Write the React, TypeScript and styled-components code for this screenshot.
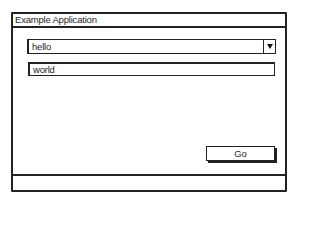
import React from "react";
import styled, { createGlobalStyle } from "styled-components";

const Global = createGlobalStyle`
  html, body { margin: 0; padding: 0; background: #ffffff; }
  body { font-family: "Liberation Sans", Arial, sans-serif; color: #1f1f1f; }
`;

const Page = styled.div`
  width: 300px;
  height: 205px;
  padding: 12px 0 0 11px;
  box-sizing: border-box;
`;

const Window = styled.div`
  width: 276px;
  height: 180px;
  box-sizing: border-box;
  border: 2px solid #222;
  border-radius: 1px;
  display: flex;
  flex-direction: column;
  background: #fff;
`;

const TitleBar = styled.div`
  height: 14px;
  box-sizing: border-box;
  border-bottom: 2px solid #222;
  display: flex;
  align-items: center;
  padding-left: 2px;
  font-size: 9.5px;
  letter-spacing: -0.2px;
  line-height: 1;
`;

const Body = styled.div`
  flex: 1;
  display: flex;
  flex-direction: column;
  padding: 11px 9px 13px 14px;
  gap: 8px;
`;

const Combo = styled.div`
  height: 15px;
  box-sizing: border-box;
  border: 1.5px solid #222;
  border-left-width: 2px;
  display: flex;
  align-items: stretch;
`;

const FieldText = styled.div`
  flex: 1;
  display: flex;
  align-items: center;
  padding-left: 3px;
  font-size: 9.5px;
  letter-spacing: -0.2px;
  line-height: 1;
`;

const DropButton = styled.div`
  width: 11px;
  border-left: 1.5px solid #222;
  display: flex;
  align-items: center;
  justify-content: center;
`;

const Arrow = styled.div`
  width: 0;
  height: 0;
  border-left: 3px solid transparent;
  border-right: 3px solid transparent;
  border-top: 5px solid #111;
`;

const TextField = styled.div`
  height: 14px;
  box-sizing: border-box;
  margin: 0 1px;
  border: 1.5px solid #222;
  border-left-width: 2px;
  border-top-width: 2px;
  display: flex;
`;

const Spacer = styled.div`
  flex: 1;
`;

const ButtonRow = styled.div`
  display: flex;
  justify-content: flex-end;
  padding-right: 1px;
`;

const GoButton = styled.div`
  width: 69px;
  height: 15px;
  box-sizing: border-box;
  border: 1px solid #222;
  box-shadow: 2px 2px 0 #222;
  display: flex;
  align-items: center;
  justify-content: center;
  font-size: 9.5px;
  line-height: 1;
  background: #fff;
`;

const StatusBar = styled.div`
  height: 14px;
  border-top: 2px solid #222;
`;

export default function App() {
  return (
    <>
      <Global />
      <Page>
        <Window>
          <TitleBar>Example Application</TitleBar>
          <Body>
            <Combo>
              <FieldText>hello</FieldText>
              <DropButton>
                <Arrow />
              </DropButton>
            </Combo>
            <TextField>
              <FieldText>world</FieldText>
            </TextField>
            <Spacer />
            <ButtonRow>
              <GoButton>Go</GoButton>
            </ButtonRow>
          </Body>
          <StatusBar />
        </Window>
      </Page>
    </>
  );
}
